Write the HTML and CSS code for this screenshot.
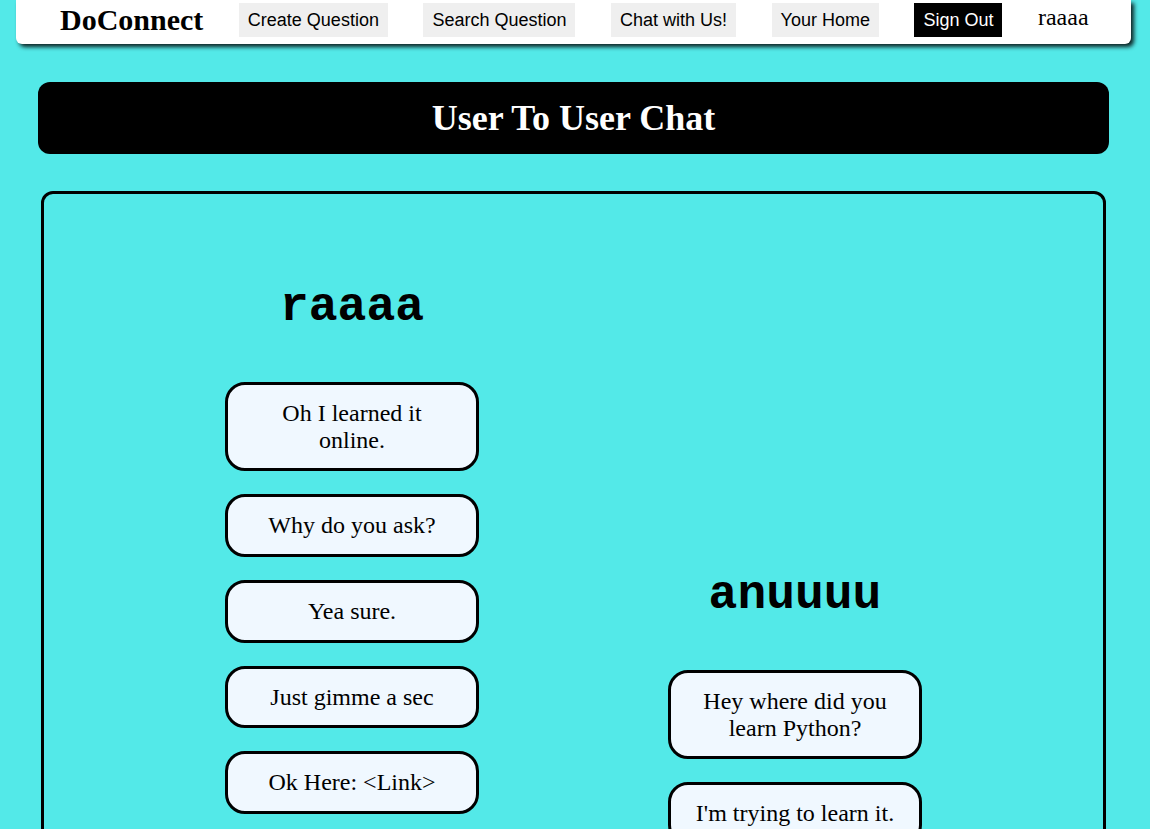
FILE: index.html
```html
<!DOCTYPE html>
<html>
<head>
<meta charset="utf-8">
<title>DoConnect - User To User Chat</title>
<link rel="stylesheet" href="styles.css">
</head>
<body>
<nav class="navbar">
  <span class="brand">DoConnect</span>
  <a class="nav-btn">Create Question</a>
  <a class="nav-btn">Search Question</a>
  <a class="nav-btn">Chat with Us!</a>
  <a class="nav-btn">Your Home</a>
  <a class="nav-btn nav-btn-dark">Sign Out</a>
  <span class="nav-user">raaaa</span>
</nav>

<header class="banner">
  <h1 class="banner-title">User To User Chat</h1>
</header>

<section class="chat">
  <div class="chat-col">
    <h2 class="chat-name">raaaa</h2>
    <div class="bubble">Oh I learned it online.</div>
    <div class="bubble">Why do you ask?</div>
    <div class="bubble">Yea sure.</div>
    <div class="bubble">Just gimme a sec</div>
    <div class="bubble">Ok Here: &lt;Link&gt;</div>
  </div>
  <div class="chat-col chat-col-right">
    <h2 class="chat-name">anuuuu</h2>
    <div class="bubble">Hey where did you learn Python?</div>
    <div class="bubble">I'm trying to learn it.</div>
  </div>
</section>
</body>
</html>
```

FILE: styles.css
```css
html, body {
  margin: 0;
  padding: 0;
}

body {
  background: #53e9e8;
  font-family: "Liberation Serif", "Times New Roman", serif;
  color: #000;
  overflow: hidden;
}

.navbar {
  margin: 0 19px 0 16px;
  height: 44px;
  background: #fff;
  border-radius: 0 0 6px 6px;
  box-shadow: 3px 3px 4px rgba(0, 0, 0, 0.85);
  display: flex;
  align-items: flex-start;
  gap: 35.5px;
  padding-left: 44px;
  box-sizing: border-box;
}

.brand {
  font-weight: bold;
  font-size: 30px;
  line-height: 40px;
}

.nav-btn {
  margin-top: 3px;
  height: 34px;
  line-height: 34px;
  padding: 0 9px;
  background: #efefef;
  font-family: "Liberation Sans", Arial, sans-serif;
  font-size: 18px;
  color: #000;
}

.nav-btn-dark {
  background: #000;
  color: #fff;
}

.nav-user {
  font-size: 24px;
  line-height: 34px;
}

.banner {
  margin: 38px 41px 0 38px;
  height: 72px;
  background: #000;
  border-radius: 12px;
  display: flex;
  align-items: center;
  justify-content: center;
}

.banner-title {
  margin: 0;
  color: #fff;
  font-size: 36px;
  font-weight: bold;
  line-height: normal;
}

.chat {
  margin: 37px 44px 0 41px;
  border: 3px solid #000;
  border-radius: 12px;
  height: 800px;
  display: flex;
  justify-content: center;
  align-items: flex-start;
  gap: 189px;
  padding-top: 86px;
}

.chat-col {
  width: 254px;
  display: flex;
  flex-direction: column;
  gap: 23.2px;
}

.chat-col-right {
  padding-top: 288px;
}

.chat-name {
  margin: 0 0 25px 0;
  text-align: center;
  font-family: "Liberation Mono", "Courier New", monospace;
  font-size: 48px;
  font-weight: bold;
  line-height: normal;
}

.bubble {
  box-sizing: border-box;
  width: 254px;
  background: #f0f8ff;
  border: 3px solid #000;
  border-radius: 20px;
  padding: 15px 22px;
  text-align: center;
  font-size: 24px;
  line-height: 26.5px;
}
```
